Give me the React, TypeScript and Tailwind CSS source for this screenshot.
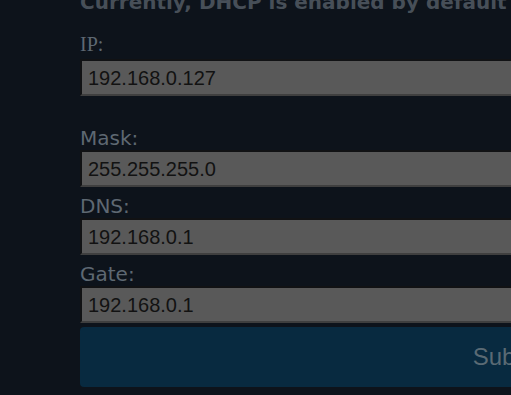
import React from "react";

const fields = [
  { label: "Mask:", value: "255.255.255.0" },
  { label: "DNS:", value: "192.168.0.1" },
  { label: "Gate:", value: "192.168.0.1" },
];

function Field({ value }: { value: string }) {
  return (
    <div className="h-[37px] w-full bg-[#595959] border-2 border-t-[#111214] border-l-[#111214] border-b-[#3f3f3f] border-r-[#3f3f3f] flex items-center pl-[6px] text-[20px] leading-none text-[#121212] [font-family:'Liberation_Sans',Arial,sans-serif]">
      {value}
    </div>
  );
}

export default function App() {
  return (
    <div className="w-[511px] h-[395px] overflow-hidden bg-[#0d131b]">
      <div className="ml-[80px] w-[860px] flex flex-col">
        <div className="mt-[-8px] h-[20px] leading-[20px] text-[20px] font-bold whitespace-nowrap text-[#474f58] [font-family:'DejaVu_Sans',Verdana,sans-serif]">
          Currently, DHCP is enabled by default on this device.
        </div>
        <div className="mt-[22px] h-[20px] leading-[20px] text-[20px] text-[#5e6872] [font-family:'Liberation_Serif','Times_New_Roman',serif]">
          IP:
        </div>
        <div className="mt-[5px]">
          <Field value="192.168.0.127" />
        </div>
        <div className="mt-[32px] flex flex-col">
          {fields.map((f, i) => (
            <div key={f.label} className={i === 0 ? "" : "mt-[9px]"}>
              <div className="h-[20px] leading-[20px] text-[20px] text-[#5e6872] [font-family:'DejaVu_Sans',Verdana,sans-serif]">
                {f.label}
              </div>
              <div className="mt-[2px]">
                <Field value={f.value} />
              </div>
            </div>
          ))}
        </div>
        <button className="mt-[4px] h-[60px] w-full rounded-[4px] bg-[#082a40] text-[24px] text-[#5a6a74] [font-family:'Liberation_Sans',Arial,sans-serif]">
          Submit
        </button>
      </div>
    </div>
  );
}
